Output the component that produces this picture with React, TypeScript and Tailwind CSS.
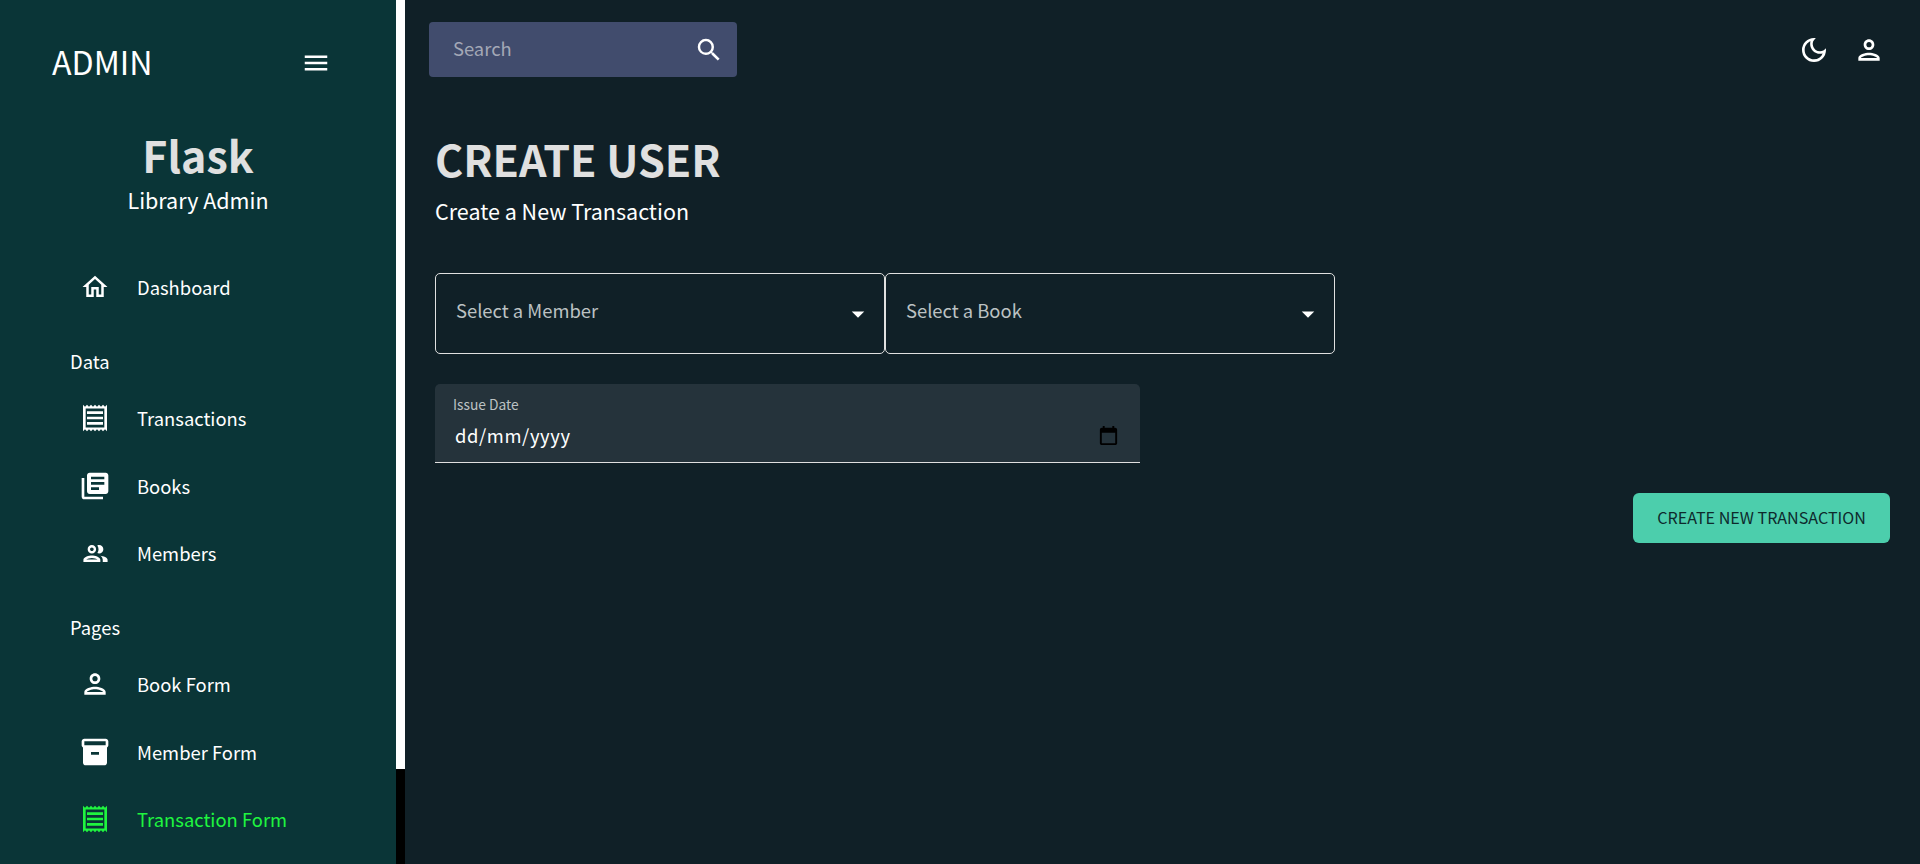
import { MdMenu, MdOutlineHome, MdOutlineReceipt, MdLibraryBooks, MdOutlinePeople, MdOutlinePerson, MdInventory2, MdOutlineDarkMode, MdSearch, MdArrowDropDown } from "react-icons/md";
import type { ComponentType } from "react";

function Row({ icon: Icon, label, active, size = 32 }: { icon: ComponentType<{ size?: number; className?: string }>; label: string; active?: boolean; size?: number }) {
  return (
    <div className={`flex h-[67.5px] items-center pl-[79px] ${active ? "text-[#1ff53f]" : "text-white"}`}>
      <span className="flex w-[32px] shrink-0 items-center justify-center">
        <Icon size={size} className="shrink-0" />
      </span>
      <span className="ml-[26px] text-[18.4px] leading-[28px]">{label}</span>
    </div>
  );
}

function Section({ label }: { label: string }) {
  return <div className="pl-[70px] text-[18.4px] leading-[28px] text-white">{label}</div>;
}

function SelectBox({ label }: { label: string }) {
  return (
    <div className="relative flex h-[81px] w-[450px] shrink-0 items-start rounded-[5px] border border-[#e0e0e0] pl-[20px] pt-[22px]">
      <span className="text-[18.4px] leading-[28px] text-[#bcc2c3]">{label}</span>
      <MdArrowDropDown size={30} className="absolute right-[11px] top-[25px] text-white" />
    </div>
  );
}

export default function App() {
  return (
    <div className="flex h-screen w-full overflow-hidden bg-[#102027] font-['Noto_Sans_CJK_SC','Noto_Sans',sans-serif] text-white">
      <aside className="flex w-[396px] shrink-0 flex-col overflow-hidden bg-[#0a3537]">
        <div className="flex h-[124px] shrink-0 items-center justify-between pl-[52px] pr-[65px]">
          <span className="-mt-[2px] text-[32.2px] leading-[44px] text-white">ADMIN</span>
          <MdMenu size={30} className="mt-[2px] text-white" />
        </div>
        <div className="mt-[5px] flex flex-col items-center">
          <div className="text-[43px] font-bold leading-[50px] text-[#e0e0e0]">Flask</div>
          <div className="mt-[6px] text-[21.5px] leading-[30px] text-white">Library Admin</div>
        </div>
        <div className="mt-[38px]">
          <Row icon={MdOutlineHome} label="Dashboard" size={30} />
          <div className="mt-[26px]"><Section label="Data" /></div>
          <div className="mt-[10px]">
            <Row icon={MdOutlineReceipt} label="Transactions" />
            <Row icon={MdLibraryBooks} label="Books" />
            <Row icon={MdOutlinePeople} label="Members" size={29} />
          </div>
          <div className="mt-[26px]"><Section label="Pages" /></div>
          <div className="mt-[9.5px]">
            <Row icon={MdOutlinePerson} label="Book Form" />
            <Row icon={MdInventory2} label="Member Form" />
            <Row icon={MdOutlineReceipt} label="Transaction Form" active />
          </div>
        </div>
      </aside>
      <div className="flex w-[9px] shrink-0 flex-col">
        <div className="h-[769px] bg-white" />
        <div className="flex-1 bg-black" />
      </div>
      <main className="flex min-w-0 flex-1 flex-col">
        <header className="flex items-start justify-between pl-[24px] pr-[35px] pt-[22px]">
          <div className="flex h-[55px] w-[308px] items-center justify-between rounded-[4px] bg-[#414c6d] pl-[24px] pr-[13px]">
            <span className="-mt-[3px] text-[18.4px] leading-[26px] text-[#a3a8b6]">Search</span>
            <MdSearch size={30} className="text-white" />
          </div>
          <div className="flex items-center gap-[23px] pt-[12px]">
            <MdOutlineDarkMode size={32} className="text-white" />
            <MdOutlinePerson size={32} className="text-white" />
          </div>
        </header>
        <section className="pl-[30px] pr-[30px] pt-[56px]">
          <h1 className="text-[43px] font-bold leading-[50px] text-[#e0e0e0]">CREATE USER</h1>
          <p className="mt-[13px] text-[21.5px] leading-[30px] text-white">Create a New Transaction</p>
          <div className="mt-[47px] flex">
            <SelectBox label="Select a Member" />
            <SelectBox label="Select a Book" />
          </div>
          <div className="relative mt-[30px] h-[79px] w-[705px] rounded-t-[5px] border-b border-[#e0e0e0] bg-[#25333b] pl-[18px] pt-[10px]">
            <div className="text-[13.8px] leading-[20px] text-[#bcc2c3]">Issue Date</div>
            <div className="pl-[2px] pt-[6px] text-[18.4px] leading-[30px] tracking-[0.6px] text-white">dd/mm/yyyy</div>
            <svg viewBox="0 0 24 24" className="absolute right-[20px] top-[40px] h-[23px] w-[23px]" fill="#000">
              <path d="M19 4h-1V2h-2v2H8V2H6v2H5c-1.1 0-2 .9-2 2v14c0 1.1.9 2 2 2h14c1.1 0 2-.9 2-2V6c0-1.1-.9-2-2-2zm0 16H5V9h14v11z" />
            </svg>
          </div>
          <div className="mt-[30px] flex justify-end">
            <div className="flex h-[50px] w-[257px] items-center justify-center rounded-[6px] bg-[#4cceac] pb-[2px] text-[16.1px] leading-[24px] text-[#0e2a2c]">
              CREATE NEW TRANSACTION
            </div>
          </div>
        </section>
      </main>
    </div>
  );
}
